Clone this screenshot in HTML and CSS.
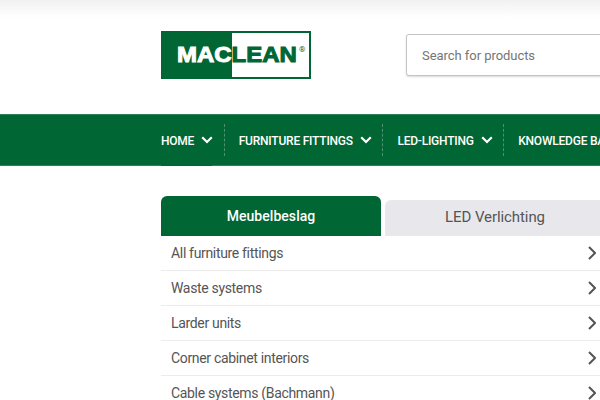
FILE: index.html
```html
<!DOCTYPE html>
<html lang="en">
<head>
<meta charset="utf-8">
<title>Maclean</title>
<link rel="stylesheet" href="styles.css">
</head>
<body>
<div class="page">
  <header class="header">
    <a class="logo" href="#">
      <span class="logo-mark"><span class="logo-text"><span class="mac">MAC</span><span class="lean">LEAN</span></span><span class="reg">®</span></span>
    </a>
    <div class="search"><span class="placeholder">Search for products</span></div>
  </header>
  <nav class="nav">
    <ul class="nav-list">
      <li class="nav-item active"><span>HOME</span><svg class="caret" viewBox="0 0 12 8" width="12" height="8"><path d="M1.2 1.2l4.8 4.8 4.8-4.8" fill="none" stroke="#fff" stroke-width="2.2"/></svg></li>
      <li class="nav-item"><span>FURNITURE FITTINGS</span><svg class="caret" viewBox="0 0 12 8" width="12" height="8"><path d="M1.2 1.2l4.8 4.8 4.8-4.8" fill="none" stroke="#fff" stroke-width="2.2"/></svg></li>
      <li class="nav-item"><span>LED-LIGHTING</span><svg class="caret" viewBox="0 0 12 8" width="12" height="8"><path d="M1.2 1.2l4.8 4.8 4.8-4.8" fill="none" stroke="#fff" stroke-width="2.2"/></svg></li>
      <li class="nav-item"><span>KNOWLEDGE BASE</span></li>
    </ul>
  </nav>
  <main class="main">
    <div class="tabs">
      <div class="tab tab-on">Meubelbeslag</div>
      <div class="tab tab-off">LED Verlichting</div>
    </div>
    <ul class="rows">
      <li class="row">All furniture fittings<svg class="arrow" viewBox="0 0 8 14" width="8" height="14"><path d="M1 1l6 6-6 6" fill="none" stroke="#555" stroke-width="2"/></svg></li>
      <li class="row">Waste systems<svg class="arrow" viewBox="0 0 8 14" width="8" height="14"><path d="M1 1l6 6-6 6" fill="none" stroke="#555" stroke-width="2"/></svg></li>
      <li class="row">Larder units<svg class="arrow" viewBox="0 0 8 14" width="8" height="14"><path d="M1 1l6 6-6 6" fill="none" stroke="#555" stroke-width="2"/></svg></li>
      <li class="row">Corner cabinet interiors<svg class="arrow" viewBox="0 0 8 14" width="8" height="14"><path d="M1 1l6 6-6 6" fill="none" stroke="#555" stroke-width="2"/></svg></li>
      <li class="row">Cable systems (Bachmann)<svg class="arrow" viewBox="0 0 8 14" width="8" height="14"><path d="M1 1l6 6-6 6" fill="none" stroke="#555" stroke-width="2"/></svg></li>
    </ul>
  </main>
</div>
</body>
</html>
```
FILE: styles.css
```css
* { box-sizing: border-box; }
html, body { margin: 0; padding: 0; height: 400px; overflow: hidden; background: #fff; }
body { font-family: Roboto, "Liberation Sans", sans-serif; color: #555; }
ul { list-style: none; margin: 0; padding: 0; }
.page { width: 600px; height: 400px; overflow: hidden; }
.header { height: 114px; display: flex; align-items: flex-start; padding: 31px 0 0 161px; background: linear-gradient(#f1f1f1 0, #fff 18px); flex-wrap: nowrap; }
.logo { display: block; flex: none; width: 150px; height: 48px; text-decoration: none; }
.logo-mark { display: flex; position: relative; align-items: center; justify-content: flex-start; width: 150px; height: 48px; border: 2px solid #006633; background: linear-gradient(90deg, #006633 47.3%, #fff 47.3%); padding-left: 14px; }
.logo-text { display: block; font-family: "Liberation Sans", Arial, sans-serif; font-weight: 700; font-size: 22px; line-height: 22px; transform: scaleX(1.09); transform-origin: left center; white-space: nowrap; }
.mac { color: #fff; -webkit-text-stroke: 1px #fff; }
.lean { color: #006633; -webkit-text-stroke: 1px #006633; }
.reg { position: absolute; left: 136px; top: 13px; font-size: 8px; line-height: 8px; color: #006633; }
.search { flex: none; width: 300px; height: 42px; margin: 3px 0 0 95px; border: 1px solid #c4c4c4; border-radius: 3px; box-shadow: 0 1px 2px rgba(0,0,0,.15); padding: 0 15px; display: flex; align-items: center; background: #fff; }
.placeholder { font-size: 13px; color: #757575; white-space: nowrap; letter-spacing: -.05px; }
.nav { height: 52px; background: #006633; padding-left: 161px; overflow: hidden; border-top: 1px solid #2b8057; box-shadow: inset 0 -1px 0 #2b8057; }
.nav-list { display: flex; width: 800px; height: 51px; align-items: flex-start; }
.nav-item { position: relative; display: flex; align-items: center; gap: 7px; color: #fff; font-size: 12px; font-weight: 500; height: 51px; padding: 2px 10.5px 1px 15px; white-space: nowrap; letter-spacing: -.22px; }
.nav-item:first-child { padding-left: 0; }
.nav-item + .nav-item::before { content: ""; position: absolute; left: 0; top: 9px; bottom: 10px; border-left: 1px dashed rgba(255,255,255,.3); }
.active::after { content: ""; position: absolute; left: 0; width: 51px; bottom: 0; height: 1px; background: #006633; }
.caret { flex: none; margin-top: -3px; }
.main { padding: 30px 0 0 161px; width: 800px; }
.tabs { display: flex; gap: 4px; height: 40px; align-items: flex-end; }
.tab { width: 220px; display: flex; align-items: center; justify-content: center; border-radius: 6px 6px 0 0; font-size: 14px; font-weight: 500; }
.tab-on { height: 40px; background: #006633; color: #fff; letter-spacing: .05px; }
.tab-off { height: 36px; background: #e8e8ec; color: #555; font-weight: 400; font-size: 15px; letter-spacing: -.08px; padding-bottom: 3px; }
.rows { width: 439px; }
.row { height: 35px; display: flex; align-items: center; justify-content: space-between; padding: 0 4px 0 10px; font-size: 14px; color: #555; border-bottom: 1px solid #ececec; letter-spacing: -.33px; }
.arrow { flex: none; }
```
